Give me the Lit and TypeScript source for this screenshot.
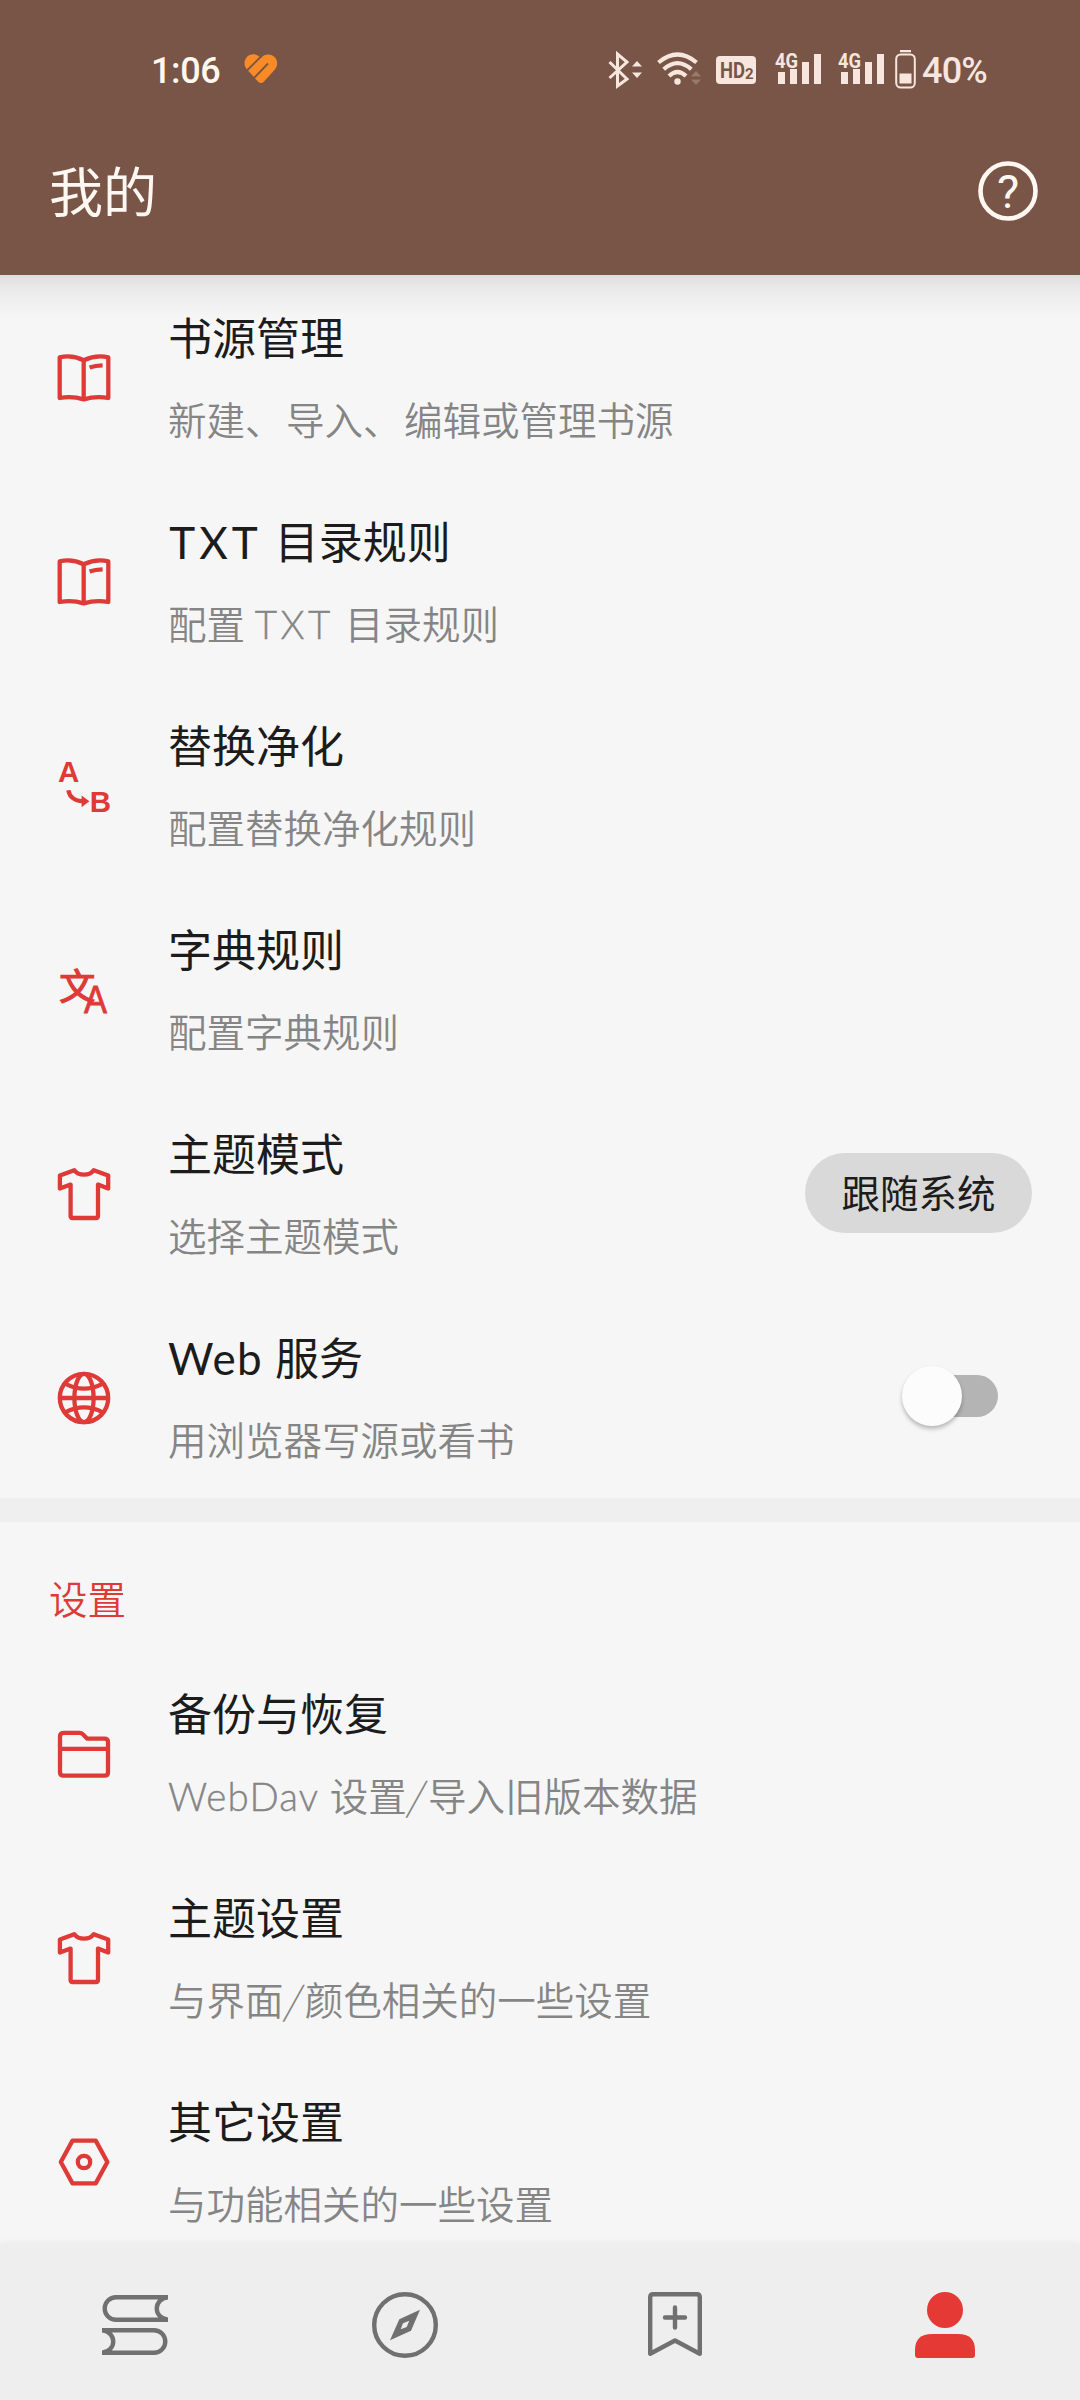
import { LitElement, html, css, svg, nothing } from "lit";
import { customElement, property } from "lit/decorators.js";

const ICONS: Record<string, unknown> = {
  book: svg`<g class="line"><path d="M2.7 6.4Q15 3.6 26.7 9.2Q39 3.6 51.3 6.4V47Q39 44.6 26.7 48.4Q15 44.6 2.7 47Z"/><path d="M26.7 9.2V48.4M32.6 16.6Q38 14.6 45.6 14.4" /></g>`,
  replace: svg`<g><text class="ab" x="1" y="23">A</text><text class="ab" x="32.8" y="53">B</text><path class="line" d="M11.4 31.2C12.4 38 17 41.6 26 42.4"/><path class="solid" d="M24.6 36.4L32.4 42.3L24.6 48.2Z"/></g>`,
  dict: svg`<g><text class="han" x="2.3" y="36.8">文</text><text class="lat" x="27" y="50.3" textLength="23" lengthAdjust="spacingAndGlyphs">A</text></g>`,
  shirt: svg`<path class="line" d="M17.3 3.2Q20.5 7.6 27 7.6Q33.5 7.6 36.7 3.2L51.2 8.6V21.6L41 17.6V49Q41 51 39 51H15.6Q13.6 51 13.6 49V17.6L2.9 21.6V8.6Z"/>`,
  globe: svg`<g class="line"><circle cx="27" cy="27" r="24.2"/><ellipse cx="27" cy="27" rx="9.6" ry="24.2"/><path d="M2.8 27H51.2M8.6 12.8Q27 22.4 45.4 12.8M8.6 41.2Q27 31.6 45.4 41.2"/></g>`,
  folder: svg`<g class="line"><path d="M7 5.8H22.5Q24.5 5.8 26 7.4L30 11.6H47.5Q51 11.6 51 15V45.3Q51 48.7 47.5 48.7H6.5Q3 48.7 3 45.3V9.3Q3 5.8 7 5.8Z"/><path d="M3 21.8H51"/></g>`,
  hex: svg`<g class="line"><path d="M15.5 5.6H38.7L50.4 27L38.7 48.4H15.5L3.8 27Z"/><circle cx="27" cy="27" r="6.2"/></g>`,
};

@customElement("pref-row")
export class PrefRow extends LitElement {
  @property() icon = "book";
  @property() heading = "";
  @property() summary = "";

  static styles = css`
    :host { display: flex; align-items: center; height: 204px; flex: none; box-sizing: border-box; padding: 0 48px 0 57px; }
    .icon { width: 54px; height: 54px; flex: none; margin-right: 57px; color: #de3a37; overflow: visible; }
    .line { fill: none; stroke: currentColor; stroke-width: 4.3; stroke-linejoin: round; stroke-linecap: butt; }
    .solid { fill: currentColor; }
    .ab { font: bold 29.5px "Liberation Sans", sans-serif; fill: currentColor; }
    .han { font: 400 36px "Noto Sans CJK SC", sans-serif; fill: currentColor; stroke: currentColor; stroke-width: 1.2; }
    .lat { font: 38px "Liberation Sans", sans-serif; fill: currentColor; stroke: currentColor; stroke-width: 0.8; }
    .text { flex: 1; white-space: nowrap; font-family: "Noto Sans CJK SC", sans-serif; }
    .heading { height: 84px; line-height: 84px; font-size: 44px; color: #1c1c1c; }
    .summary { height: 84px; line-height: 81px; font-size: 38.5px; color: #858585; font-weight: 350; }
    .latin { font-family: Lato, "Noto Sans", sans-serif; font-weight: 400; letter-spacing: 0.03em; margin-right: 0.05em; }
    .summary .latin { font-weight: 300; -webkit-text-stroke: 0.4px #858585; }
    .latin.caps { letter-spacing: 0.09em; margin: 0 0.07em 0 0.03em; }
    .slash { display: inline-block; padding: 0 3px; transform: skewX(-12deg); font-weight: 300; }
    .comma { letter-spacing: 2.5px; }
  `;

  private runs(text: string) {
    return text
      .split(/([A-Za-z]+|\/|、)/)
      .filter(Boolean)
      .map((t) => {
        if (t === "/") return html`<span class="slash">/</span>`;
        if (t === "、") return html`<span class="comma">、</span>`;
        if (/^[A-Z]+$/.test(t)) return html`<span class="latin caps">${t}</span>`;
        if (/^[A-Za-z]/.test(t)) return html`<span class="latin">${t}</span>`;
        return t;
      });
  }

  render() {
    return html`
      <svg class="icon" viewBox="0 0 54 54">${ICONS[this.icon] ?? nothing}</svg>
      <div class="text">
        <div class="heading">${this.runs(this.heading)}</div>
        <div class="summary">${this.runs(this.summary)}</div>
      </div>
      <slot></slot>
    `;
  }
}

@customElement("status-bar")
export class StatusBar extends LitElement {
  static styles = css`
    :host { display: flex; align-items: center; height: 140px; box-sizing: border-box; padding: 0 92px 0 151px; color: #f6e6de; font-family: Roboto, sans-serif; }
    svg { display: block; flex: none; overflow: visible; }
    .time { font-size: 36px; font-weight: 500; color: #fff8ee; width: 93px; line-height: 42px; padding-top: 2px; letter-spacing: -0.4px; }
    .logo { margin-right: auto; margin-top: -3px; }
    .bt { margin-right: 14px; }
    .wifi { margin-right: 15px; }
    .hd { margin-right: 19px; }
    .sig { margin-right: 17px; }
    .sig.last { margin-right: 11px; }
    .bat { margin-right: 6px; }
    .pct { font-size: 36px; line-height: 42px; padding-top: 2px; font-weight: 500; width: 66px; white-space: nowrap; letter-spacing: -0.8px; }
    .ln { fill: none; stroke: currentColor; }
    .fl { fill: currentColor; }
    .hdt { font: bold 22px Roboto, sans-serif; fill: #795548; }
    .hds { font: bold 15px Roboto, sans-serif; fill: #795548; }
    .g { font: bold 20px Roboto, sans-serif; fill: currentColor; }
  `;

  private signal(cls: string) {
    return html`<svg class=${cls} width="46" height="40" viewBox="0 0 46 40">
      <text class="g" x="0" y="17.5" textLength="23" lengthAdjust="spacingAndGlyphs">4G</text>
      <path class="fl" d="M3 22h7v12h-7zM15 19h7v15h-7zM27 12h7v22h-7zM39 4h7v30h-7z"/></svg>`;
  }

  render() {
    return html`
      <span class="time">1:06</span>
      <svg class="logo" width="34" height="30" viewBox="0 0 34 30">
        <path fill="#f98a26" d="M17 4C13.5-.5 6-1 2.5 3.5C-.5 7.500 0 12 3 15.500L14 27.500Q17 30.500 20 27.500L30.500 16C34 12 34 7 31 3.500C27.500-.5 20.500-.5 17 4Z"/>
        <path fill="none" stroke="#795547" stroke-width="1.8" d="M17 2.500L3 16.500M24 9.500L9.500 24.500"/>
      </svg>
      <svg class="bt" width="35" height="40" viewBox="0 0 35 40">
        <path class="ln" stroke-width="3" d="M1.5 12L19 29L9.5 36V4L19 12L1.5 28"/>
        <path class="fl" d="M24 16.500L29 11L34 16.500ZM24 22.500L29 28L34 22.500Z"/>
      </svg>
      <svg class="wifi" width="44" height="40" viewBox="0 0 44 40">
        <g class="ln" stroke-width="4.2"><path d="M1.500 12.500Q20.500-3.500 39.500 12.500M6.700 19.300Q20.500 7 34.300 19.300M12 26Q20.500 18 29 26"/></g>
        <circle class="fl" cx="20.5" cy="31.5" r="3.2"/>
        <path class="fl" opacity=".25" d="M34 26.500L39 21L44 26.500ZM34 29.500L39 35L44 29.500Z"/>
      </svg>
      <svg class="hd" width="40" height="28" viewBox="0 0 40 28">
        <rect class="fl" width="40" height="28" rx="4"/>
        <text class="hdt" x="4" y="22" textLength="25" lengthAdjust="spacingAndGlyphs">HD</text>
        <text class="hds" x="29" y="22.5">2</text>
      </svg>
      ${this.signal("sig")}${this.signal("sig last")}
      <svg class="bat" width="21" height="40" viewBox="0 0 21 40">
        <path class="fl" d="M5 0h11v2.200h-11zM4.500 23.500h12v10h-12z"/>
        <rect class="ln" stroke-width="2" x="1.2" y="4.5" width="18.6" height="33" rx="4.5"/>
      </svg>
      <span class="pct">40%</span>
    `;
  }
}

@customElement("app-root")
export class AppRoot extends LitElement {
  static styles = css`
    :host { display: flex; flex-direction: column; width: 1080px; height: 2400px; overflow: hidden; background: #f6f6f6; font-family: "Noto Sans CJK SC", sans-serif; }
    .header { flex: none; height: 275px; background: #795547; }
    .bar { display: flex; align-items: center; justify-content: space-between; height: 102px; padding: 0 42px 0 49px; }
    .title { color: #fff8f2; font-size: 54px; line-height: 99px; height: 102px; }
    .help { display: block; width: 60px; height: 60px; }
    .ring { fill: none; stroke: #fff8f2; stroke-width: 4.6; }
    .mark { font: 47px Roboto, sans-serif; fill: #fff8f2; text-anchor: middle; }
    .content { flex: 1; min-height: 0; overflow: hidden; display: flex; flex-direction: column; background: linear-gradient(#dcdddc 0, #e6e7e6 10px, #eeeeee 22px, #f2f2f2 34px, #f6f6f6 42px) no-repeat; }
    .group { display: flex; flex-direction: column; flex: none; padding-top: 1px; height: 1222px; }
    .divider { flex: none; height: 24px; background: #efefef; }
    .label { flex: none; height: 130px; line-height: 150px; padding-left: 49px; font-size: 38.5px; font-weight: 350; color: #de3a37; }
    .pill { display: block; width: 227px; height: 80px; line-height: 77px; margin-top: -2px; border-radius: 40px; background: #d9d9d9; color: #1c1c1c; font-size: 38.5px; text-align: center; }
    .switch { display: flex; align-items: center; width: 88px; height: 42px; margin-right: 34px; margin-top: -4px; border-radius: 21px; background: #b4b4b4; }
    .thumb { width: 60px; height: 60px; flex: none; margin-left: -8px; border-radius: 50%; background: #fcfcfc; box-shadow: 0 3px 4px rgba(0, 0, 0, 0.25); }
    .nav { flex: none; display: flex; height: 156px; background: #eee; box-shadow: 0 -3px 6px #eeeeee; z-index: 1; }
    .tab { flex: 1; display: flex; align-items: center; justify-content: center; padding-top: 6px; color: #707070; }
    .tab.active { color: #e53935; }
    .nicon { width: 66px; height: 66px; display: block; }
    .nl { fill: none; stroke: currentColor; stroke-width: 4.4; }
    .nf { fill: currentColor; }
  `;

  render() {
    return html`
      <div class="header">
        <status-bar></status-bar>
        <div class="bar">
          <span class="title">我的</span>
          <svg class="help" viewBox="0 0 60 60">
            <circle class="ring" cx="30" cy="30" r="27.5"/>
            <text class="mark" x="30" y="46.5">?</text>
          </svg>
        </div>
      </div>
      <div class="content">
        <div class="group">
          <pref-row icon="book" heading="书源管理" summary="新建、导入、编辑或管理书源"></pref-row>
          <pref-row icon="book" heading="TXT 目录规则" summary="配置 TXT 目录规则"></pref-row>
          <pref-row icon="replace" heading="替换净化" summary="配置替换净化规则"></pref-row>
          <pref-row icon="dict" heading="字典规则" summary="配置字典规则"></pref-row>
          <pref-row icon="shirt" heading="主题模式" summary="选择主题模式"><span class="pill">跟随系统</span></pref-row>
          <pref-row icon="globe" heading="Web 服务" summary="用浏览器写源或看书"><span class="switch"><span class="thumb"></span></span></pref-row>
        </div>
        <div class="divider"></div>
        <div class="label">设置</div>
        <pref-row icon="folder" heading="备份与恢复" summary="WebDav 设置/导入旧版本数据"></pref-row>
        <pref-row icon="shirt" heading="主题设置" summary="与界面/颜色相关的一些设置"></pref-row>
        <pref-row icon="hex" heading="其它设置" summary="与功能相关的一些设置"></pref-row>
      </div>
      <div class="nav">
        <div class="tab"><svg class="nicon" viewBox="0 0 66 66"><g class="nl">
          <path d="M66 5.200H14A11.300 11.300 0 0 0 14 27.800H66M66 5.200C51 7 51 26 66 27.800"/>
          <path d="M0 38.200H52A11.300 11.300 0 0 1 52 60.800H0M0 38.200C15 40 15 59 0 60.800"/></g></svg></div>
        <div class="tab"><svg class="nicon" viewBox="0 0 66 66">
          <circle class="nl" cx="33" cy="33" r="30.8"/>
          <path class="nf" fill-rule="evenodd" d="M48 17.700L39 38.700L18 48.200L27.300 27.300ZM37.300 28.700L31 31.300L28.700 37.300L34.700 35Z"/></svg></div>
        <div class="tab"><svg class="nicon" viewBox="0 0 66 66"><g class="nl" stroke-linejoin="round" stroke-linecap="round">
          <path d="M8.200 61.800V5.200Q8.200 2.200 11.200 2.200H54.800Q57.800 2.200 57.800 5.200V61.800L33 48.500Z"/><path d="M23 25.500H43M33 15.500V35.500"/></g></svg></div>
        <div class="tab active"><svg class="nicon" viewBox="0 0 66 66">
          <circle class="nf" cx="33" cy="18" r="18"/>
          <path class="nf" d="M3 58Q3 42 20 42H46Q63 42 63 58V63Q63 66 60 66H6Q3 66 3 63Z"/></svg></div>
      </div>
    `;
  }
}
